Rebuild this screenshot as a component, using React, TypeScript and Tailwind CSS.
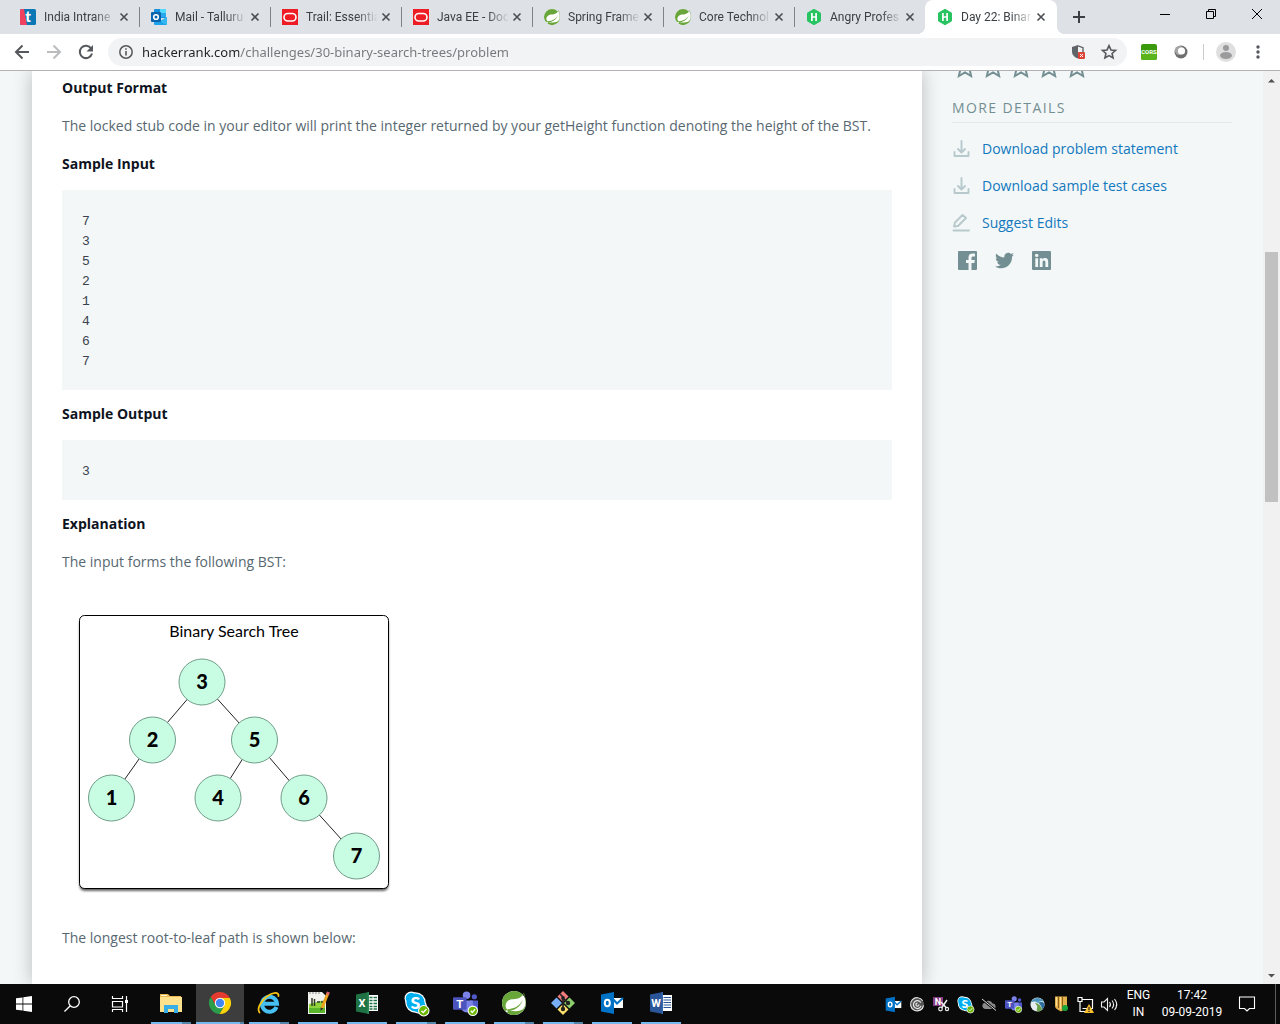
import React, { type ReactNode } from "react";
import { SiSpring } from "react-icons/si";
import { FaTwitter } from "react-icons/fa";

/* ---------- shared glyphs ---------- */

function Svg({ size, box = "0 0 24 24", children }: { size: number; box?: string; children: ReactNode }) {
  return (
    <svg width={size} height={size} viewBox={box} fill="none" aria-hidden="true" className="block shrink-0 overflow-visible">
      {children}
    </svg>
  );
}

function IntranetIcon() {
  return (
    <Svg size={16} box="0 0 16 16">
      <rect width="16" height="16" rx="1.5" fill="#0b77b5" />
      <path d="M0 1.5A1.500 1.500 0 0 1 1.500 0H4L7 16H1.500A1.500 1.500 0 0 1 0 14.500Z" fill="#f0415f" />
      <text x="8" y="13" textAnchor="middle" fontSize="15" fontWeight="900" fontFamily="Lato, sans-serif" fill="#fff">t</text>
    </Svg>
  );
}

function OutlookWebIcon() {
  return (
    <Svg size={16} box="0 0 16 16">
      <rect x="3" y="0" width="12" height="9" rx="1" fill="#1490df" />
      <rect x="9" y="0" width="6" height="4" fill="#50d9ff" />
      <rect x="9" y="4" width="6" height="4" fill="#28a8ea" />
      <path d="M3 8L10 12L16 8V15A1 1 0 0 1 15 16H4A1 1 0 0 1 3 15Z" fill="#1aa2ec" />
      <path d="M16 8L9 12L15 16H16Z" fill="#35b8f1" />
      <rect x="0" y="3" width="10" height="10" rx="1" fill="#0a64ad" />
      <circle cx="5" cy="8" r="2.300" stroke="#fff" strokeWidth="1.600" />
    </Svg>
  );
}

function OracleIcon() {
  return (
    <Svg size={16} box="0 0 16 16">
      <rect width="16" height="16" fill="#ee1c25" />
      <rect x="2" y="4.500" width="12" height="7.500" rx="3.750" stroke="#fff" strokeWidth="1.600" />
    </Svg>
  );
}

function SpringIcon({ large = false }: { large?: boolean }) {
  return (
    <span className="block rounded-full bg-white text-[#68a63a]">
      <SiSpring size={large ? 24 : 16} aria-hidden="true" />
    </span>
  );
}

function RankIcon() {
  return (
    <Svg size={16} box="0 0 16 16">
      <path d="M8 0.300L14.500 4V12L8 15.700L1.500 12V4Z" fill="#27c461" stroke="#27c461" strokeWidth="1" strokeLinejoin="round" />
      <path d="M5.900 4V12M10.100 4V12M5.900 8H10.100" stroke="#fff" strokeWidth="1.700" />
    </Svg>
  );
}

/* ---------- browser tabs ---------- */

const tabs = [
  { title: "India Intrane", icon: <IntranetIcon /> },
  { title: "Mail - Talluru", icon: <OutlookWebIcon /> },
  { title: "Trail: Essentia", icon: <OracleIcon /> },
  { title: "Java EE - Doc", icon: <OracleIcon /> },
  { title: "Spring Frame", icon: <SpringIcon /> },
  { title: "Core Technol", icon: <SpringIcon /> },
  { title: "Angry Profes", icon: <RankIcon /> },
  { title: "Day 22: Binar", icon: <RankIcon />, active: true },
];

function TabStrip() {
  return (
    <header className="flex h-[34px] shrink-0 bg-[#dee1e6] pl-2">
      {tabs.map((tab, i) => (
        <div
          key={tab.title}
          className={
            tab.active
              ? "relative flex w-[132px] items-center rounded-t-lg bg-white pr-2 pl-3"
              : "flex w-[131px] items-center pr-[7px] pl-3"
          }
        >
          {tab.active && (
            <>
              <span className="absolute bottom-0 -left-2 size-2 bg-[radial-gradient(circle_at_0_0,#dee1e6_8px,#fff_8px)]" />
              <span className="absolute -right-2 bottom-0 size-2 bg-[radial-gradient(circle_at_100%_0,#dee1e6_8px,#fff_8px)]" />
            </>
          )}
          <a href="#" className="flex min-w-0 flex-1 items-center gap-2">
            {tab.icon}
            <span className="min-w-0 flex-1 font-[Roboto,sans-serif] text-xs whitespace-nowrap text-[#3c4043] [mask-image:linear-gradient(to_right,black_70%,transparent)]">
              {tab.title}
            </span>
          </a>
          <button type="button" aria-label={`Close ${tab.title}`} className="flex size-4 items-center justify-center">
            <Svg size={8} box="0 0 8 8">
              <path d="M0.500 0.500L7.500 7.500M7.500 0.500L0.500 7.500" stroke="#4a4d51" strokeWidth="1.600" />
            </Svg>
          </button>
          {!tab.active && <span className={i < 6 ? "-mr-2 ml-[7px] h-5 w-px bg-[#808387]" : "-mr-2 ml-[7px] w-px"} />}
        </div>
      ))}
      <button type="button" aria-label="New tab" className="ml-2 flex w-7 items-center justify-center">
        <Svg size={12} box="0 0 12 12">
          <path d="M6 0V12M0 6H12" stroke="#3c4043" strokeWidth="2" />
        </Svg>
      </button>
      <div className="ml-auto flex h-7">
        <button type="button" aria-label="Minimize" className="flex w-[46px] items-center justify-center">
          <Svg size={10} box="0 0 10 10"><path d="M0 5.500H10" stroke="#000" /></Svg>
        </button>
        <button type="button" aria-label="Restore" className="flex w-[46px] items-center justify-center">
          <Svg size={10} box="0 0 10 10"><path d="M0.500 2.500H7.500V9.500H0.500ZM2.500 2.500V0.500H9.500V7.500H7.500" stroke="#000" /></Svg>
        </button>
        <button type="button" aria-label="Close window" className="flex w-[46px] items-center justify-center">
          <Svg size={10} box="0 0 10 10"><path d="M0 0L10 10M10 0L0 10" stroke="#000" /></Svg>
        </button>
      </div>
    </header>
  );
}

/* ---------- address bar ---------- */

const star = "M12 2.500L14.900 8.900L21.800 9.600L16.600 14.200L18.100 21L12 17.400L5.900 21L7.400 14.200L2.200 9.600L9.100 8.900Z";

function Toolbar() {
  return (
    <nav className="flex h-[37px] shrink-0 items-center border-b border-[#b3b1b3] bg-white">
      <button type="button" aria-label="Back" className="ml-[6px] flex size-8 items-center justify-center">
        <Svg size={16} box="0 0 16 16"><path d="M15 8H2M8.500 1.500L2 8L8.500 14.500" stroke="#55585c" strokeWidth="2" /></Svg>
      </button>
      <button type="button" aria-label="Forward" className="flex size-8 items-center justify-center">
        <Svg size={16} box="0 0 16 16"><path d="M1 8H14M7.500 1.500L14 8L7.500 14.500" stroke="#babcbe" strokeWidth="2" /></Svg>
      </button>
      <button type="button" aria-label="Reload" className="flex size-8 items-center justify-center">
        <Svg size={16} box="0 0 16 16">
          <path d="M13.200 4.500A6.200 6.200 0 1 0 14 9.500" stroke="#55585c" strokeWidth="2" />
          <path d="M15 1V7.500H8.500Z" fill="#55585c" />
        </Svg>
      </button>
      <div className="ml-[6px] flex h-7 min-w-0 flex-1 items-center rounded-full bg-[#f1f3f4] pr-[10px] pl-[11px]">
        <button type="button" aria-label="Site information">
          <Svg size={14} box="0 0 14 14">
            <circle cx="7" cy="7" r="6.200" stroke="#55585c" strokeWidth="1.500" />
            <path d="M7 6V10.500M7 3.200V4.800" stroke="#55585c" strokeWidth="1.600" />
          </Svg>
        </button>
        <input
          type="text"
          aria-label="Address"
          defaultValue="hackerrank.com/challenges/30-binary-search-trees/problem"
          className="ml-[9px] min-w-0 flex-1 bg-[linear-gradient(to_right,#202124_97px,#74787d_97px)] bg-clip-text font-['Noto_Sans',sans-serif] text-[13px] leading-5 text-transparent outline-none"
        />
        <button type="button" aria-label="Blocked content" className="mr-[15px]">
          <Svg size={16} box="0 0 16 16">
            <path d="M8 1L2 3V7.500C2 11 4.500 13.300 8 14.500Z" fill="#606367" />
            <path d="M8 1.800L13 3.700V8" stroke="#606367" strokeWidth="1.400" />
            <rect x="8" y="8" width="7" height="7" rx="1" fill="#db4437" />
            <path d="M10 10L13 13M13 10L10 13" stroke="#fff" />
          </Svg>
        </button>
        <button type="button" aria-label="Bookmark this page">
          <Svg size={16}><path d={star} stroke="#55585c" strokeWidth="2.400" /></Svg>
        </button>
      </div>
      <button type="button" aria-label="CORS" className="ml-[14px]">
        <Svg size={16} box="0 0 16 16">
          <rect width="16" height="16" rx="2" fill="#3a9a0b" />
          <rect y="8" width="16" height="8" rx="2" fill="#5bb41a" />
          <text x="8" y="10" textAnchor="middle" fontSize="6" fontWeight="700" fontFamily="Roboto, sans-serif" fill="#fff">CORS</text>
        </Svg>
      </button>
      <button type="button" aria-label="Extension" className="ml-4">
        <Svg size={16} box="0 0 16 16">
          <circle cx="8" cy="8" r="6.500" fill="#6f6f6f" />
          <circle cx="6.500" cy="6.500" r="4.600" fill="#a5a5a5" />
          <circle cx="8.500" cy="7" r="3.600" fill="#fff" />
        </Svg>
      </button>
      <span className="ml-[14px] h-4 w-px bg-[#cacccf]" />
      <button type="button" aria-label="Profile" className="ml-3">
        <Svg size={20} box="0 0 20 20">
          <circle cx="10" cy="10" r="10" fill="#dfdfe0" />
          <circle cx="10" cy="6" r="3" fill="#9b9b9d" />
          <ellipse cx="10" cy="13.500" rx="6" ry="3.500" fill="#9b9b9d" />
        </Svg>
      </button>
      <button type="button" aria-label="Menu" className="mr-[14px] ml-[14px]">
        <Svg size={16} box="0 0 16 16">
          <circle cx="8" cy="3" r="1.700" fill="#55585c" />
          <circle cx="8" cy="8" r="1.700" fill="#55585c" />
          <circle cx="8" cy="13" r="1.700" fill="#55585c" />
        </Svg>
      </button>
    </nav>
  );
}

/* ---------- challenge page ---------- */

const nodes = [
  { n: 3, x: 142, y: 82 },
  { n: 2, x: 92.5, y: 140 },
  { n: 5, x: 194.5, y: 140 },
  { n: 1, x: 51.5, y: 198 },
  { n: 4, x: 158, y: 198 },
  { n: 6, x: 244, y: 198 },
  { n: 7, x: 296.5, y: 256 },
];
const edges = [[0, 1], [0, 2], [1, 3], [2, 4], [2, 5], [5, 6]];

function TreeDiagram() {
  return (
    <svg width="348" height="310" viewBox="2 0 348 310" role="img" aria-label="Binary Search Tree" className="mt-7 block">
      <rect x="19.500" y="18" width="309" height="273" rx="5" fill="#666" className="blur-[1px]" />
      <rect x="19.500" y="15.500" width="309" height="273" rx="5" fill="#fff" stroke="#000" />
      <text x="174" y="37" textAnchor="middle" fontSize="16" fontFamily="Lato, sans-serif" fill="#000">Binary Search Tree</text>
      {edges.map(([a, b]) => (
        <line key={`${a}-${b}`} x1={nodes[a].x} y1={nodes[a].y} x2={nodes[b].x} y2={nodes[b].y} stroke="#222" />
      ))}
      {nodes.map(({ n, x, y }) => (
        <g key={n}>
          <circle cx={x} cy={y} r="23" fill="#c8fde4" stroke="#6f9d88" />
          <text x={x} y={y + 7} textAnchor="middle" fontSize="20" fontWeight="900" fontFamily="Lato, sans-serif" fill="#000">{n}</text>
        </g>
      ))}
    </svg>
  );
}

const heading = "text-sm leading-5 font-bold text-[#0e141e]";
const para = "text-sm leading-5 text-[#576871]";
const sample = "bg-[#f3f7f7] px-5 pt-[22px] pb-[18px] font-['Liberation_Mono',monospace] text-[13px] leading-5 text-[#39424e]";

function Problem() {
  return (
    <article className="min-w-0 flex-1 bg-white px-[30px] pt-[7px] shadow-[0_0_18px_rgba(0,0,0,0.24)]">
      <h2 className={heading}>Output Format</h2>
      <p className={`${para} mt-[18px]`}>
        The locked stub code in your editor will print the integer returned by your getHeight function denoting the height of the BST.
      </p>
      <h2 className={`${heading} mt-[18px]`}>Sample Input</h2>
      <pre className={`${sample} mt-4`}>{"7\n3\n5\n2\n1\n4\n6\n7"}</pre>
      <h2 className={`${heading} mt-[14px]`}>Sample Output</h2>
      <pre className={`${sample} mt-4`}>3</pre>
      <h2 className={`${heading} mt-[14px]`}>Explanation</h2>
      <p className={`${para} mt-[18px]`}>The input forms the following BST:</p>
      <TreeDiagram />
      <p className={`${para} mt-[18px]`}>The longest root-to-leaf path is shown below:</p>
    </article>
  );
}

function DownloadIcon() {
  return (
    <Svg size={18} box="0 0 18 18">
      <path d="M9.500 1V12M6 9L9.500 12.500L13 9M2.500 12V16H16.500V12" stroke="#b7c9cc" strokeWidth="1.900" strokeLinejoin="round" strokeLinecap="round" />
    </Svg>
  );
}

function EditIcon() {
  return (
    <Svg size={18} box="0 0 18 18">
      <path d="M2 12.500L3 8.500L10.500 1L14 4L6 12ZM1.500 16.500H17" stroke="#b7c9cc" strokeWidth="1.900" strokeLinejoin="round" strokeLinecap="round" />
    </Svg>
  );
}

const actions = [
  { label: "Download problem statement", icon: <DownloadIcon /> },
  { label: "Download sample test cases", icon: <DownloadIcon /> },
  { label: "Suggest Edits", icon: <EditIcon /> },
];

function Sidebar() {
  return (
    <aside className="mr-[31px] ml-[30px] w-[280px] shrink-0">
      <div className="-mt-4 flex gap-1 pl-px">
        {[1, 2, 3, 4, 5].map((n) => (
          <button key={n} type="button" aria-label={`Rate ${n}`} className="flex w-6 justify-center">
            <Svg size={24}><path d={star} stroke="#738f93" strokeWidth="2" /></Svg>
          </button>
        ))}
      </div>
      <h3 className="mt-[19px] border-b border-[#e3e8ea] pb-1 text-sm leading-5 tracking-[1.4px] text-[#738f93]">MORE DETAILS</h3>
      <ul className="mt-4 flex flex-col gap-[17px]">
        {actions.map((a) => (
          <li key={a.label}>
            <a href="#" className="flex items-center gap-3 text-sm leading-5 text-[#1278be]">
              {a.icon}
              {a.label}
            </a>
          </li>
        ))}
      </ul>
      <div className="mt-[18px] flex items-center gap-[18px] pl-[6px] text-[#738f93]">
        <a href="#" aria-label="Facebook">
          <Svg size={19} box="0 0 19 19">
            <rect width="19" height="19" rx="1" fill="#738f93" />
            <path d="M17 5.500H15.200C13.800 5.500 13.500 6 13.500 7.200V9H16.800L16.400 12H13.500V19H10.500V12H8V9H10.500V6.700C10.500 4 12 2.600 14.500 2.600C15.700 2.600 16.600 2.700 17 2.800Z" fill="#f3f7f7" />
          </Svg>
        </a>
        <a href="#" aria-label="Twitter"><FaTwitter size={19} /></a>
        <a href="#" aria-label="LinkedIn">
          <Svg size={19} box="0 0 19 19">
            <rect width="19" height="19" rx="1" fill="#738f93" />
            <circle cx="4.700" cy="4.400" r="1.700" fill="#f3f7f7" />
            <path d="M3.300 7.200H6.100V16H3.300ZM7.800 7.200H10.500V8.400C11.100 7.500 12 7 13.200 7C15.700 7 16.200 8.700 16.200 11V16H13.400V11.600C13.400 10.400 13.300 9.400 12.100 9.400C10.900 9.400 10.600 10.300 10.600 11.500V16H7.800Z" fill="#f3f7f7" />
          </Svg>
        </a>
      </div>
    </aside>
  );
}

function ScrollBar() {
  return (
    <div className="flex w-[17px] shrink-0 flex-col items-center bg-[#f1f1f1]">
      <div className="flex h-[18px] items-center">
        <Svg size={7} box="0 0 7 7"><path d="M0 5.500L3.500 2L7 5.500Z" fill="#505050" /></Svg>
      </div>
      <div className="flex min-h-0 flex-1 flex-col">
        <div className="flex-[163]" />
        <div className="w-[13px] flex-[250] bg-[#c1c1c1]" />
        <div className="flex-[465]" />
      </div>
      <div className="flex h-[18px] items-center">
        <Svg size={7} box="0 0 7 7"><path d="M0 2L3.500 5.500L7 2Z" fill="#505050" /></Svg>
      </div>
    </div>
  );
}

/* ---------- taskbar ---------- */

function OfficeIcon({ letter, fill, dark, children }: { letter: string; fill: string; dark: string; children: ReactNode }) {
  return (
    <Svg size={24}>
      {children}
      <path d="M1 3.500L14 1V23L1 20.500Z" fill={fill} />
      <path d="M14 1L12.500 1.300V22.700L14 23Z" fill={dark} />
      <text x="7" y="16" textAnchor="middle" fontSize="11" fontWeight="700" fontFamily="Roboto, sans-serif" fill="#fff">{letter}</text>
    </Svg>
  );
}

function CheckBadge({ x, y, r }: { x: number; y: number; r: number }) {
  return (
    <g>
      <circle cx={x} cy={y} r={r} fill="#6bb700" stroke="#fff" strokeWidth="1" />
      <path d={`M${x - r * 0.45} ${y}L${x - r * 0.1} ${y + r * 0.35}L${x + r * 0.5} ${y - r * 0.35}`} stroke="#fff" strokeWidth="1.300" />
    </g>
  );
}

function SkypeIcon({ size }: { size: number }) {
  return (
    <Svg size={size}>
      <circle cx="7" cy="7" r="6.500" fill="#fff" />
      <circle cx="15" cy="15" r="7" fill="#fff" />
      <circle cx="11" cy="11" r="9.800" fill="#fff" />
      <circle cx="7" cy="7" r="5.300" fill="#00aff0" />
      <circle cx="15" cy="15" r="5.800" fill="#00aff0" />
      <circle cx="11" cy="11" r="8.600" fill="#00aff0" />
      <text x="11" y="17" textAnchor="middle" fontSize="17" fontWeight="900" fontFamily="Lato, sans-serif" fill="#fff">S</text>
      <CheckBadge x={19} y={19} r={5} />
    </Svg>
  );
}

function TeamsIcon({ size }: { size: number }) {
  return (
    <Svg size={size}>
      <circle cx="13" cy="4" r="3.600" fill="#7b83eb" />
      <circle cx="20.500" cy="5.500" r="2.500" fill="#5059c9" />
      <path d="M16 9H24V16A4 4 0 0 1 16 17Z" fill="#5059c9" />
      <path d="M8 9H19V17A6 6 0 0 1 8 17Z" fill="#7b83eb" />
      <rect x="0" y="6" width="13" height="12" rx="1" fill="#4b53bc" />
      <text x="6.500" y="16" textAnchor="middle" fontSize="11" fontWeight="700" fontFamily="Roboto, sans-serif" fill="#fff">T</text>
      <CheckBadge x={19} y={19} r={4.5} />
    </Svg>
  );
}

function OutlookIcon({ size }: { size: number }) {
  return (
    <Svg size={size}>
      <rect x="12" y="7" width="11" height="10" fill="#fff" />
      <path d="M12 7L17 12.500L23 7" stroke="#0072c6" strokeWidth="2" />
      <path d="M1 3.500L14 1V23L1 20.500Z" fill="#0072c6" />
      <ellipse cx="7.300" cy="12" rx="2.500" ry="3.300" stroke="#fff" strokeWidth="2" />
    </Svg>
  );
}

const chromeSector = "M21.800 7A11 11 0 0 0 2.770 6.010L7.670 14.500L12 12L12 7Z";

const apps: { name: string; icon: ReactNode; multi?: boolean; active?: boolean }[] = [
  {
    name: "File Explorer", multi: true,
    icon: (
      <Svg size={22} box="1 1 22 22">
        <path d="M1 3H9L11 5H22V21H1Z" fill="#e9b84e" />
        <path d="M1 6H23V21H1Z" fill="#fde18d" />
        <path d="M5 22V14H19V22H15V18H9V22Z" fill="#38aee6" />
        <path d="M2 4.500H8" stroke="#fff6d5" />
      </Svg>
    ),
  },
  {
    name: "Google Chrome", multi: true, active: true,
    icon: (
      <Svg size={24}>
        <path d={chromeSector} fill="#e33b2e" />
        <path d={chromeSector} fill="#fcd209" transform="rotate(120 12 12)" />
        <path d={chromeSector} fill="#2b9e4b" transform="rotate(240 12 12)" />
        <circle cx="12" cy="12" r="5.200" fill="#fff" />
        <circle cx="12" cy="12" r="4.200" fill="#4285f4" />
      </Svg>
    ),
  },
  {
    name: "Internet Explorer", multi: true,
    icon: (
      <Svg size={24}>
        <path d="M19.500 16A7.500 7.500 0 1 1 20 12.800H6" stroke="#46c0f2" strokeWidth="4" />
        <path d="M2.500 21.500C-0.500 18 4 9.500 10.500 5C16 1.200 22 0.500 21.500 5" stroke="#f5c518" strokeWidth="1.800" strokeLinecap="round" />
      </Svg>
    ),
  },
  {
    name: "Notepad++",
    icon: (
      <Svg size={24}>
        <path d="M2 1H16L20 5V23H2Z" fill="#f2f3ef" />
        <path d="M3 13L19 9V22H3Z" fill="#8fd43c" />
        <path d="M3 17H19V22H3Z" fill="#5bb52b" />
        <path d="M4 1V3M7 1V3M10 1V3M13 1V3" stroke="#888" />
        <path d="M6 7V15M8.500 8V15M11 11H14M15 11H18" stroke="#303b26" strokeWidth="1.500" />
        <path d="M22 2L16 17" stroke="#eda31e" strokeWidth="3" />
        <path d="M22.500 1L21.500 3.500" stroke="#e06070" strokeWidth="3" />
        <path d="M14.600 16.500L14.500 20L17.400 17.600Z" fill="#333" />
      </Svg>
    ),
  },
  {
    name: "Excel",
    icon: (
      <OfficeIcon letter="X" fill="#1f7244" dark="#2b8a57">
        <rect x="12" y="4" width="11" height="16" fill="#fff" />
        <path d="M14.500 6.500H22M14.500 9.500H22M14.500 12.500H22M14.500 15.500H22M14.500 18H22" stroke="#1f7244" strokeWidth="1.500" />
        <path d="M18 5V19" stroke="#fff" />
      </OfficeIcon>
    ),
  },
  { name: "Skype", multi: true, icon: <SkypeIcon size={25} /> },
  { name: "Teams", icon: <TeamsIcon size={25} /> },
  { name: "Spring Tool Suite", multi: true, icon: <SpringIcon large /> },
  {
    name: "Git Bash", multi: true,
    icon: (
      <Svg size={24}>
        <path d="M12 0L17.500 5.500L12 11L6.500 5.500Z" fill="#f37c7c" />
        <path d="M18.500 6.500L24 12L18.500 17.500L13 12Z" fill="#8bd06b" />
        <path d="M12 13L17.500 18.500L12 24L6.500 18.500Z" fill="#ffe06d" />
        <path d="M5.500 6.500L11 12L5.500 17.500L0 12Z" fill="#78b0f7" />
        <path d="M9 3L12 6V19M12 7L17 12" stroke="#222" strokeWidth="1.700" />
        <circle cx="12" cy="7" r="1.900" fill="#222" />
        <circle cx="12" cy="18" r="2.200" fill="#222" />
        <circle cx="17" cy="12" r="2.200" fill="#222" />
      </Svg>
    ),
  },
  { name: "Outlook", icon: <OutlookIcon size={24} /> },
  {
    name: "Word",
    icon: (
      <OfficeIcon letter="W" fill="#2a5699" dark="#3767ad">
        <rect x="12" y="4" width="11" height="16" fill="#fff" />
        <path d="M14.500 6.500H22M14.500 9H22M14.500 11.500H22M14.500 14H22M14.500 16.500H22" stroke="#2a5699" />
      </OfficeIcon>
    ),
  },
];

const tray: { name: string; icon: ReactNode }[] = [
  { name: "Outlook", icon: <OutlookIcon size={17} /> },
  {
    name: "Citrix",
    icon: (
      <Svg size={15} box="0 0 16 16">
        <circle cx="8" cy="8" r="7" fill="#555" />
        <path d="M13.500 4A7 7 0 1 0 14.500 9M11.500 6A4.200 4.200 0 1 0 11.800 9.500M9.500 8A1.600 1.600 0 1 1 8 6.500" stroke="#e5e5e5" strokeWidth="1.300" />
      </Svg>
    ),
  },
  {
    name: "OneNote clipper",
    icon: (
      <Svg size={16} box="0 0 16 16">
        <rect x="0" y="1" width="10" height="9" fill="#843a82" />
        <text x="5" y="9" textAnchor="middle" fontSize="9" fontWeight="700" fontFamily="Roboto, sans-serif" fill="#fff">N</text>
        <path d="M14 4L8.500 12M8 6L13.500 12" stroke="#eee" strokeWidth="1.500" />
        <circle cx="7.500" cy="13" r="1.800" stroke="#eee" strokeWidth="1.200" />
        <circle cx="14" cy="13" r="1.600" stroke="#eee" strokeWidth="1.200" />
      </Svg>
    ),
  },
  { name: "Skype", icon: <SkypeIcon size={17} /> },
  {
    name: "Cloud offline",
    icon: (
      <Svg size={16} box="0 0 16 16">
        <path d="M4 13A3.200 3.200 0 0 1 3.500 6.800A4.500 4.500 0 0 1 11.500 7.500A2.900 2.900 0 0 1 13 13Z" fill="#8b8b8b" />
        <path d="M1 3L15 14.500" stroke="#0a0a0a" strokeWidth="2.400" />
        <path d="M1 3L15 14.500" stroke="#ddd" />
      </Svg>
    ),
  },
  { name: "Teams", icon: <TeamsIcon size={17} /> },
  {
    name: "VPN",
    icon: (
      <Svg size={15} box="0 0 16 16">
        <circle cx="8" cy="8" r="7.500" fill="#e6edf2" />
        <path d="M0.800 6C3 0 12 -1 15 5C12 3.500 10 5 8.500 6.500C6 4 3 4.500 0.800 6Z" fill="#4b95bd" />
        <path d="M5 7C8 5.500 11 8 13 13.500C9 17 6 15 7.500 12C8.500 10 7 8 5 7Z" fill="#6a9f4a" />
        <path d="M9 6C12 4 15 5 15.500 8C15.500 11 14 12.500 13 13.500C12.500 10 11 8 9 6Z" fill="#2d6f9e" />
      </Svg>
    ),
  },
  {
    name: "Security",
    icon: (
      <Svg size={16} box="0 0 16 16">
        <path d="M2 0.500H14V10C14 13 10 14 8 15.500C6 14 2 13 2 10Z" fill="#e3b04b" />
        <path d="M5.500 1V12M9.500 1V14" stroke="#8a5d12" />
        <path d="M3.500 1V10M7.500 1V13" stroke="#f8dd94" />
        <circle cx="12" cy="12" r="3" fill="#18a63a" />
      </Svg>
    ),
  },
  {
    name: "Network",
    icon: (
      <Svg size={17} box="0 0 17 17">
        <path d="M5.500 3.500H15.500V12.500H5.500M3 6V15.500H9M1 1.500H5V5.500H1Z" stroke="#fff" strokeWidth="1.200" />
        <path d="M12 8L17 17H7Z" fill="#fbc02d" />
        <path d="M12 11V14M12 14.800V16" stroke="#222" strokeWidth="1.200" />
      </Svg>
    ),
  },
  {
    name: "Volume",
    icon: (
      <Svg size={17} box="0 0 17 17">
        <path d="M0.500 6H3L6.500 2.500V14.500L3 11H0.500ZM8.500 6C9.700 7.500 9.700 9.500 8.500 11M11 4.500C13 7 13 10 11 12.500M13.500 3C16.300 6.500 16.300 10.500 13.500 14" stroke="#eee" strokeWidth="1.100" />
      </Svg>
    ),
  },
];

function Taskbar() {
  return (
    <footer className="flex h-10 shrink-0 bg-[#0a0a0a] font-[Roboto,sans-serif] text-white">
      <button type="button" aria-label="Start" className="flex w-12 items-center justify-center">
        <Svg size={16} box="0 0 16 16">
          <path d="M0 2.300L6.500 1.400V7.600H0ZM7.300 1.200L16 0V7.600H7.300ZM0 8.400H6.500V14.600L0 13.700ZM7.300 8.400H16V16L7.300 14.800Z" fill="#fff" />
        </Svg>
      </button>
      <button type="button" aria-label="Search" className="flex w-12 items-center justify-center">
        <Svg size={16} box="0 0 16 16">
          <circle cx="10" cy="6" r="5.300" stroke="#fff" strokeWidth="1.300" />
          <path d="M6.300 9.700L0.500 15.500" stroke="#fff" strokeWidth="1.300" />
        </Svg>
      </button>
      <button type="button" aria-label="Task view" className="flex w-12 items-center justify-center">
        <Svg size={16} box="0 0 16 16">
          <path d="M0.500 0V2.500H10.500V0M0.500 5.500H10.500V11H0.500ZM0.500 16V13.500H10.500V16M14.500 0V16" stroke="#fff" strokeWidth="1.200" />
          <rect x="13" y="4" width="3" height="3" fill="#fff" />
        </Svg>
      </button>
      <div className="ml-[3px] flex">
        {apps.map((app) => (
          <button
            key={app.name}
            type="button"
            aria-label={app.name}
            className={app.active ? "mr-px flex w-12 flex-col bg-[#3d3d3d]" : "flex w-[49px] flex-col px-1 pr-[5px]"}
          >
            <span className="flex flex-1 items-center justify-center self-stretch">{app.icon}</span>
            <span className="flex h-[2px] self-stretch">
              <span className="flex-1 bg-[#76b9ed]" />
              {app.multi && <span className={app.active ? "w-1 bg-[#5485ab]" : "w-[9px] bg-[#5485ab]"} />}
            </span>
          </button>
        ))}
      </div>
      <div className="ml-auto flex">
        {tray.map((t) => (
          <button key={t.name} type="button" aria-label={`${t.name} status`} className="flex w-6 items-center justify-center">
            {t.icon}
          </button>
        ))}
      </div>
      <button type="button" className="flex w-[35px] flex-col items-center justify-center text-xs leading-[17px]">
        <span>ENG</span>
        <span>IN</span>
      </button>
      <button type="button" className="flex w-[72px] flex-col items-center justify-center text-xs leading-[17px]">
        <span>17:42</span>
        <span>09-09-2019</span>
      </button>
      <button type="button" aria-label="Notifications" className="flex w-[38px] items-center justify-center">
        <Svg size={16} box="0 0 16 16">
          <path d="M0.500 1H15.500V12.500H10.500L8 15L5.500 12.500H0.500Z" stroke="#fff" strokeWidth="1.100" />
        </Svg>
      </button>
      <span className="mr-1 ml-[9px] w-px bg-[#5c5c5c]" />
    </footer>
  );
}

export default function App() {
  return (
    <div className="flex h-screen flex-col overflow-hidden bg-[#f3f7f7] font-['Open_Sans',sans-serif]">
      <TabStrip />
      <Toolbar />
      <div className="flex min-h-0 flex-1">
        <main className="flex min-w-0 flex-1 overflow-hidden pl-8">
          <Problem />
          <Sidebar />
        </main>
        <ScrollBar />
      </div>
      <Taskbar />
    </div>
  );
}
